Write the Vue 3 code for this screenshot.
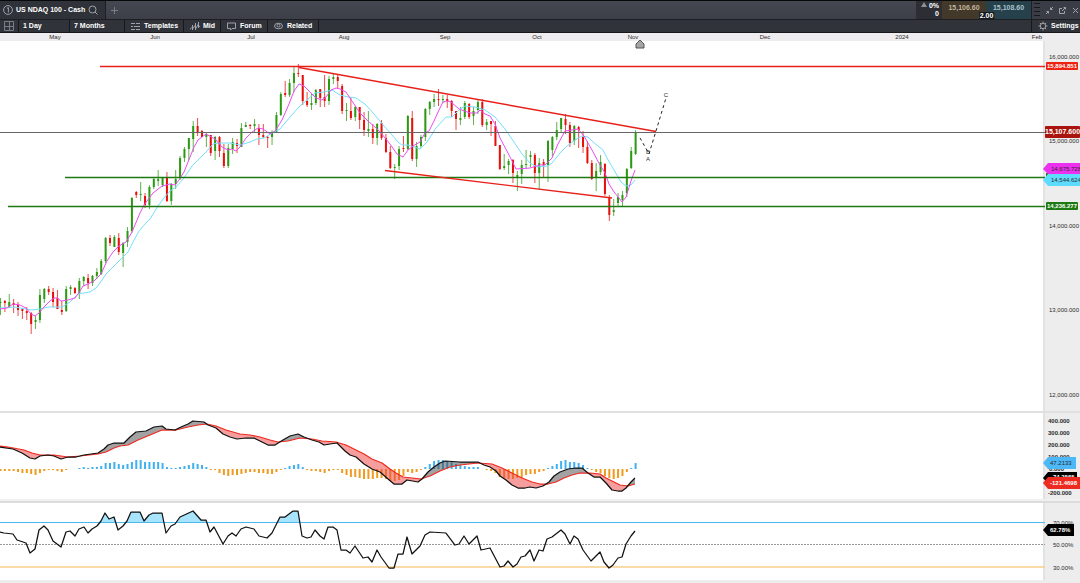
<script setup>
const months = [
  ['May', 55], ['Jun', 155], ['Jul', 251], ['Aug', 344], ['Sep', 445],
  ['Oct', 537], ['Nov', 633], ['Dec', 765], ['2024', 902], ['Feb', 1037],
]

// direction, high, body top, body bottom, low
const rawCandles = `g 298 302 303 315|r 300 301 303 312|g 294 302 307 308|r 299 303 305 313|r 302 305 310 316|r 308 309 311 319|r 307 311 313 320|r 312 313 324 334|g 316 320 322 329|g 289 295 320 323
g 288 289 299 303|r 286 289 292 295|r 288 292 302 307|r 290 298 309 309|r 301 310 312 315|g 286 289 311 312|g 285 287 289 295|r 287 288 293 294|g 278 281 293 299|g 276 277 281 286
r 274 278 283 289|g 275 276 283 286|g 268 272 276 279|g 259 261 274 275|g 237 238 261 263|r 235 238 243 246|g 235 237 247 247|r 233 238 252 255|g 242 243 253 267|g 227 231 242 247
g 197 198 231 233|r 191 192 195 198|g 182 194 195 201|r 193 196 205 208|g 185 187 205 209|g 178 179 187 189|g 170 179 181 186|g 177 178 185 187|r 172 177 201 202|g 183 184 201 205
g 170 179 184 189|g 156 158 178 180|g 147 149 158 162|g 138 138 149 160|g 121 126 139 152|r 118 126 132 136|r 130 131 137 137|g 132 134 137 147|r 135 135 153 156|g 136 137 151 160
r 136 137 151 157|r 144 153 166 168|g 144 148 166 168|g 138 142 149 154|r 139 143 146 153|g 123 128 147 147|g 122 125 127 127|r 124 125 126 129|g 119 124 126 133|r 124 128 135 145
r 124 135 137 138|r 136 137 138 148|g 130 132 137 145|g 112 115 132 132|g 92 94 115 116|r 81 93 95 97|g 79 83 95 97|g 67 73 83 92|r 64 73 74 77|r 75 75 101 105
r 92 101 105 107|g 94 103 105 110|g 89 90 103 105|r 89 89 98 107|r 75 97 101 107|g 76 79 101 105|g 73 77 79 84|r 75 77 81 88|r 84 86 111 114|g 103 110 111 121
r 97 111 118 120|g 106 107 117 121|r 107 107 120 129|r 112 120 130 136|g 111 129 131 137|r 124 129 138 144|g 123 124 138 145|r 120 123 138 140|r 134 138 152 153|r 146 152 168 169
g 164 167 168 179|g 146 149 166 170|r 136 148 149 152|g 115 116 149 150|r 111 118 159 161|g 142 146 159 167|g 135 137 146 148|g 108 109 137 141|g 101 102 109 115|g 94 99 102 107
r 89 99 100 106|g 95 99 100 103|r 95 99 101 108|r 100 101 111 117|r 111 111 119 130|g 107 118 120 125|g 101 103 117 119|r 103 104 117 119|g 107 111 116 125|g 100 102 110 114
r 99 102 125 127|g 119 122 125 130|r 121 121 124 136|r 121 126 146 146|r 145 145 169 170|g 154 166 168 170|g 159 161 165 174|r 159 160 173 183|g 171 175 178 191|g 160 165 174 184
g 150 164 165 169|g 151 155 157 167|r 153 155 173 183|g 158 163 173 189|r 159 162 165 177|g 140 141 165 182|g 136 137 150 156|g 122 130 137 140|g 118 118 129 133|r 114 119 125 134
r 122 125 143 147|g 125 126 141 145|r 126 127 130 148|r 131 137 147 153|r 141 147 163 164|r 160 163 179 180|g 163 171 177 191|g 155 162 172 175|r 163 164 194 196|r 195 198 215 221
g 199 210 212 216|g 193 197 203 207|g 191 195 200 207|g 168 169 193 197|g 147 151 168 169|g 130 133 154 155`

const barX = (i) => 0.5 + i * 4.38

const candles = rawCandles.split(/[|\n]/).map((row, i) => {
  const [dir, high, top, bottom, low] = row.split(' ')
  return { x: barX(i), dir, high: +high, top: +top, bottom: Math.max(+bottom, +top + 1), low: +low }
})

const fastAverage = '0,309 7,308 13,304 20,305 26,308 31,314 35,316 39,313 44,307 50,301 54,298 57,298 61,301 68,300 75,298 78,294 83,286 88,284 94,281 101,274 107,261 113,252 119,246 126,242 132,232 140,213 144,205 153,193 162,186 170,184 175,185 179,180 184,172 190,157 194,147 198,140 206,134 215,139 222,147 228,150 232,149 236,151 240,147 246,138 252,132 258,128 263,129 270,134 275,131 282,120 289,104 294,91 299,84 304,86 310,92 316,98 322,100 326,97 331,90 336,88 340,89 346,92 352,101 360,113 368,121 376,128 381,133 390,144 397,154 403,157 408,150 413,146 420,142 425,133 429,131 434,121 439,110 443,102 447,101 451,102 459,109 470,113 477,113 480,110 485,114 490,116 495,124 500,138 508,153 512,161 516,169 530,168 540,165 545,165 552,158 558,144 565,131 572,130 578,129 584,136 592,150 600,165 605,173 609,184 614,192 619,198 622,202 626,197 631,181 635,170'

const slowAverage = '0,308 15,307 26,309 31,310 40,309 48,307 62,307 70,302 78,294 90,292 96,288 100,283 106,274 114,266 122,258 128,252 133,242 139,231 145,224 150,219 158,206 164,198 170,191 176,187 184,178 192,166 199,159 206,152 213,144 219,143 230,143 240,145 250,142 257,139 264,138 272,133 280,129 290,117 299,107 308,99 315,93 324,92 332,90 340,95 348,97 356,98 365,104 374,114 384,126 392,135 398,142 402,145 408,145 414,147 420,149 427,142 436,128 446,117 452,117 460,109 465,106 475,107 485,110 495,117 505,129 514,142 522,154 530,163 537,167 548,166 552,163 560,153 567,146 575,140 582,136 588,137 592,141 598,146 603,150 607,158 614,170 621,182 626,186 631,185 635,180'

const macd = '0,447 13,449 22,453 30,458 35,459 40,456 48,455 54,456 61,459 68,457 76,457 84,455 98,453 104,449 108,445 114,443 124,443 130,437 136,432 146,431 154,427 162,426 166,429 175,430 181,427 188,424 193,421 204,422 208,425 216,428 223,434 230,437 237,439 246,438 254,438 260,441 268,445 275,445 283,440 290,436 298,434 304,437 312,440 319,442 324,445 330,444 337,443 345,451 350,455 356,457 364,464 372,469 380,472 388,479 394,484 402,484 407,480 418,482 422,479 428,472 434,467 440,463 445,461 460,462 478,462 484,465 490,467 496,471 500,476 506,480 512,485 518,488 525,488 530,487 536,488 543,486 549,482 554,476 560,472 568,469 576,468 582,468 588,473 594,477 600,477 606,483 612,490 618,491 622,491 626,488 631,482 635,478'

const signal = '0,446 8,447 24,450 32,453 40,455 54,455 68,457 80,456 98,454 106,452 114,448 120,446 128,445 138,440 150,435 162,430 176,430 188,427 198,425 207,424 216,426 226,430 240,434 250,435 260,437 270,440 278,442 288,441 300,438 312,439 322,441 336,442 346,445 356,450 364,454 372,459 382,463 390,469 396,473 403,477 412,478 421,479 430,476 440,471 450,467 460,465 478,463 492,464 502,468 512,473 522,478 532,482 540,484 548,484 556,482 564,478 572,475 580,473 590,473 600,474 606,478 614,482 620,485 628,486 635,484'

const rsi = '0,532 4,533 13,534 17,540 26,543 30,553 35,549 39,530 44,526 48,530 53,541 61,547 66,532 70,531 75,536 79,529 84,527 88,533 92,529 97,526 101,521 105,513 109,519 114,517 118,530 123,526 127,521 131,512 140,512 144,521 149,515 153,513 162,513 166,533 171,526 175,524 180,517 193,511 201,520 206,520 210,532 214,527 223,544 228,536 232,533 236,536 241,529 246,527 254,529 259,536 267,538 272,533 280,517 285,517 293,511 298,511 302,536 307,538 311,537 315,530 320,536 324,539 328,527 333,527 337,530 341,550 346,550 350,553 355,546 363,558 368,557 372,562 377,550 381,557 389,568 394,568 398,554 403,554 407,537 412,554 420,546 425,535 430,532 446,533 455,545 459,544 464,536 469,544 477,536 481,550 490,548 500,567 504,566 508,561 513,567 517,564 521,557 525,556 530,550 534,561 539,550 543,551 547,539 552,537 561,530 565,534 570,544 574,536 578,539 583,550 591,561 600,552 604,562 609,568 613,565 618,558 622,557 626,544 631,536 635,531'

const histogram = [
  -2, -2, -2, -2, -3, -4, -4, -5, -6, -4, -2, -1, -1, -2, -3, -1, 0, 0, 1, 2, 1, 2, 2, 3, 6, 6, 7, 5, 4, 5,
  7, 9, 9, 7, 7, 7, 7, 6, 2, 1, 1, 2, 3, 4, 6, 5, 4, 2, -1, -1, -4, -6, -7, -6, -6, -5, -4, -3, -3, -4,
  -4, -5, -5, -3, -1, 1, 3, 4, 5, 2, -1, -2, -2, -3, -4, -2, -1, -1, -4, -6, -8, -8, -9, -10, -10, -10, -9, -9, -10, -12,
  -12, -11, -7, -3, -4, -3, -1, 2, 5, 8, 9, 9, 8, 7, 5, 4, 3, 2, 2, 2, 0, -1, -2, -4, -8, -9, -10, -10, -9, -9,
  -6, -5, -5, -3, -2, 1, 3, 5, 8, 9, 7, 7, 6, 4, 1, -1, -3, -4, -7, -9, -10, -9, -7, -3, 1, 6,
]

const bars = histogram.map((v, i) => ({
  x: barX(i) - 1,
  y: v > 0 ? 469 - v : 469,
  height: Math.abs(v),
  kind: v > 0 ? 'rise' : 'fall',
}))

const parse = (s) => s.split(' ').map((p) => p.split(',').map(Number))

function sample(points) {
  const out = []
  let k = 0
  for (let x = 0; x <= 635; x++) {
    while (k < points.length - 2 && points[k + 1][0] < x) k++
    const [x0, y0] = points[k]
    const [x1, y1] = points[k + 1]
    out.push(y0 + ((y1 - y0) * (x - x0)) / (x1 - x0))
  }
  return out
}

function between(a, b) {
  const forward = a.map((y, x) => `${x},${y.toFixed(1)}`)
  const back = b.map((y, x) => `${x},${y.toFixed(1)}`).reverse()
  return [...forward, ...back].join(' ')
}

const m = sample(parse(macd))
const s = sample(parse(signal))
const r = sample(parse(rsi))
const bullArea = between(m.map((y, x) => Math.min(y, s[x])), s)
const bearArea = between(s, m.map((y, x) => Math.max(y, s[x])))
const overbought = between(r.map((y) => Math.min(y, 522)), r.map(() => 522))
const oversold = between(r.map((y) => Math.max(y, 567)), r.map(() => 567))
</script>

<template>
  <main class="terminal">
    <header class="titlebar">
      <div class="tab">
        <svg class="icon" width="10" height="10" viewBox="0 0 10 10">
          <circle cx="5" cy="5" r="4.400" /><path d="M4 3.400 5.400 2.500V7.500" />
        </svg>
        <span>US NDAQ 100 - Cash</span>
        <button class="plain" aria-label="Search">
          <svg class="icon" width="10" height="10" viewBox="0 0 10 10">
            <circle cx="4.500" cy="4.500" r="3.500" /><path d="M7 7 9.500 9.500" />
          </svg>
        </button>
      </div>
      <button class="plain add" aria-label="Add tab">
        <svg class="icon dim" width="7" height="7" viewBox="0 0 7 7"><path d="M3.500 0v7M0 3.500h7" /></svg>
      </button>
      <div class="change">
        <span><svg width="6" height="6" viewBox="0 0 6 6"><path d="M3 0 6 5H0z" fill="#8d9096" /></svg> 0%</span>
        <span>0</span>
      </div>
      <div class="quotes">
        <button class="quote sell">15,106.60</button>
        <button class="quote buy">15,108.60</button>
        <span class="spread">2.00</span>
      </div>
      <div class="window">
        <svg class="grip" width="6" height="16" viewBox="0 0 6 16"><path d="M0 1.500h6M0 5.500h6M0 9.500h6M0 13.500h6" /></svg>
        <button class="plain" aria-label="Shrink">
          <svg class="icon" width="7" height="7" viewBox="0 0 7 7"><path d="M7 0 4.500 2.500M4.500 .5v2h2M0 7 2.500 4.500M.5 4.500h2v2" /></svg>
        </button>
        <button class="plain" aria-label="Detach">
          <svg class="icon" width="7" height="7" viewBox="0 0 7 7"><path d="M3 1.500H.5v5h5V4M3 4 6.500 .5M4.500 .5h2v2" /></svg>
        </button>
        <button class="plain" aria-label="Close">
          <svg class="icon" width="7" height="7" viewBox="0 0 7 7"><path d="M1 1l5 5M6 1l-5 5" /></svg>
        </button>
      </div>
    </header>

    <nav class="toolbar">
      <button class="tool grid" aria-label="Layout">
        <svg class="icon dim" width="10" height="10" viewBox="0 0 10 10"><path d="M.5 .5h9v9h-9zM5.500 .5v9M.5 5.500h9" /></svg>
      </button>
      <button class="tool day">1 Day</button>
      <button class="tool range">7 Months</button>
      <button class="tool templates">
        <svg class="icon" width="9" height="9" viewBox="0 0 9 9"><path d="M0 1.500h4M5 1.500h4M0 4.500h2M3 4.500h6M0 7.500h4M5 7.500h4" /></svg>
        Templates
      </button>
      <button class="tool mid">
        <svg class="icon" width="10" height="9" viewBox="0 0 10 9"><path d="M0 7.500 1.500 5.500M2.500 3v5M2.500 7 5.500 3M5.500 1v7M5.500 7 8.500 2M8.500 0v6M8.500 5 10 4" /></svg>
        Mid
      </button>
      <button class="tool forum">
        <svg class="icon" width="9" height="9" viewBox="0 0 9 9"><path d="M.5 1h8v5.500H5L3.500 8V6.500H.5z" /></svg>
        Forum
      </button>
      <button class="tool related">
        <svg class="icon" width="9" height="8" viewBox="0 0 9 8"><ellipse cx="4.500" cy="4" rx="4" ry="2.800" /><circle cx="4.500" cy="3.500" r="1.500" /></svg>
        Related
      </button>
      <button class="tool settings">
        <svg class="icon" width="10" height="10" viewBox="0 0 10 10">
          <circle cx="5" cy="5" r="2.700" /><path d="M5 .5v1.500M5 8v1.500M.5 5H2M8 5h1.500M1.800 1.800l1.200 1.200M7 7l1.200 1.200M8.200 1.800 7 3M3 7 1.800 8.200" />
        </svg>
        Settings
      </button>
    </nav>

    <svg class="panel" viewBox="0 33 1080 378" role="img" aria-label="Price chart">
      <rect y="33" width="1080" height="8" fill="#eeecee" />
      <rect x="1043" y="41" width="37" height="370" fill="#ededed" />
      <rect x="1043" y="41" width="2" height="370" fill="#e2e2e2" />
      <text v-for="[label, x] in months" :key="label" :x="x" y="39" class="middle">{{ label }}</text>
      <path d="M636 44l4-4 4 4v4h-8z" fill="#a5a5a5" stroke="#555" />

      <g v-for="(c, i) in candles" :key="i" :class="c.dir">
        <line :x1="c.x" :x2="c.x" :y1="c.high" :y2="c.low" class="wick" />
        <rect :x="c.x - 1" :y="c.top" width="2" :height="c.bottom - c.top" />
      </g>
      <polyline :points="slowAverage" class="line slow" />
      <polyline :points="fastAverage" class="line fast" />

      <path d="M100 66.500H1045" stroke="#e8201a" stroke-width="1.500" />
      <path d="M0 132.500H1045" stroke="#666" />
      <path d="M65 177.500H1045M8 206.500H1045" stroke="#1d7a12" stroke-width="1.500" />
      <path d="M299 67.500 656 131.500M385 170.500 612 198" stroke="#e8201a" stroke-width="1.400" />
      <path d="M640 138 648 152M649 154 666 98" stroke="#222" stroke-dasharray="3 3" />
      <g class="middle">
        <text x="648" y="154">B</text>
        <text x="648" y="161">A</text>
        <text x="666" y="97">C</text>
      </g>

      <text x="1049" y="59">16,000.000</text>
      <text x="1049" y="143">15,000.000</text>
      <text x="1049" y="228">14,000.000</text>
      <text x="1049" y="312">13,000.000</text>
      <text x="1049" y="397">12,000.000</text>
      <rect x="1046" y="62" width="32" height="8" rx="1" fill="#ee2211" />
      <text x="1047" y="68" class="tag">15,894.851</text>
      <rect x="1045" y="126" width="35" height="12" rx="1" fill="#a9140c" />
      <text x="1045" y="134" class="tag large">15,107.600</text>
      <rect x="1046" y="173" width="32" height="8" fill="#1d7a12" />
      <path d="M1043 169l5-6h32v11h-32z" fill="#ec30f0" />
      <text x="1051" y="171">14,675.728</text>
      <path d="M1043 180l5-6h32v12h-32z" fill="#5edcff" />
      <text x="1051" y="182">14,544.624</text>
      <rect x="1046" y="202" width="32" height="8" rx="1" fill="#1d7a12" />
      <text x="1047" y="208" class="tag">14,236.277</text>
    </svg>

    <svg class="panel" viewBox="0 411 1080 90" role="img" aria-label="MACD">
      <rect x="1043" y="411" width="37" height="90" fill="#ededed" />
      <rect x="1043" y="411" width="2" height="90" fill="#e2e2e2" />
      <rect y="411" width="1080" height="2" fill="#e0e0e0" />
      <rect v-for="(b, i) in bars" :key="i" :class="b.kind" :x="b.x" :y="b.y" width="2" :height="b.height" />
      <polygon :points="bullArea" class="bull" />
      <polygon :points="bearArea" class="bear" />
      <polyline :points="signal" class="line signal" />
      <polyline :points="macd" class="line dark" />
      <rect y="499" width="1080" height="2" fill="#f0f0f0" />
      <g class="strong">
        <text x="1048" y="423">400.000</text>
        <text x="1048" y="435">300.000</text>
        <text x="1048" y="447">200.000</text>
        <text x="1048" y="459">100.000</text>
        <text x="1049" y="471">0.000</text>
        <text x="1048" y="495">-200.000</text>
      </g>
      <path d="M1043 478l5-6h29v12h-29z" fill="#000" />
      <text x="1051" y="479" class="tag">-74.2565</text>
      <path d="M1043 463l5-6h28v12h-28z" fill="#4db8f8" />
      <text x="1050" y="465">47.2133</text>
      <path d="M1043 483l5-6h32v12h-32z" fill="#ee2b20" />
      <text x="1050" y="485" class="tag">-121.4698</text>
    </svg>

    <svg class="panel" viewBox="0 501 1080 82" role="img" aria-label="RSI">
      <rect x="1043" y="501" width="37" height="82" fill="#ededed" />
      <rect x="1043" y="501" width="2" height="82" fill="#e2e2e2" />
      <rect y="501" width="1080" height="2" fill="#dcdcdc" />
      <polygon :points="overbought" fill="#a8e4fb" />
      <polygon :points="oversold" fill="#ffd27a" />
      <path d="M0 522.500H1045" stroke="#4cb9ea" />
      <path d="M0 544.500H1045" stroke="#999" stroke-dasharray="2 1" />
      <path d="M0 567H1045" stroke="#f8cf8a" stroke-width="1.500" />
      <polyline :points="rsi" class="line dark" />
      <rect y="580" width="1080" height="3" fill="#ededed" />
      <text x="1053" y="525">70.00%</text>
      <text x="1053" y="547">50.00%</text>
      <text x="1053" y="570">30.00%</text>
      <path d="M1043 530l5-6h26v12h-26z" fill="#000" />
      <text x="1050" y="532" class="tag">62.78%</text>
    </svg>
  </main>
</template>

<style>
body {
  margin: 0;
  background: #fff;
}
</style>

<style scoped>
.terminal {
  font-family: "Liberation Sans", Arial, sans-serif;
  font-size: 7px;
  line-height: 8px;
  color: #fff;
  overflow: hidden;
}

button {
  font: inherit;
  color: inherit;
  background: none;
  border: 0;
  padding: 0;
  margin: 0;
}

.titlebar {
  display: flex;
  height: 20px;
  box-sizing: border-box;
  border-top: 1px solid #08090b;
  border-bottom: 1px solid #1c1e22;
  background: linear-gradient(#454851, #3c3f47);
}

.tab {
  display: flex;
  align-items: center;
  gap: 3px;
  width: 106px;
  box-sizing: border-box;
  padding-left: 3px;
  font-weight: bold;
  background: #2f3238;
  border-right: 1px solid #1c1e22;
}

.plain {
  display: flex;
  align-items: center;
}

.add {
  margin-left: 5px;
}

.icon {
  fill: none;
  stroke: #9fa2a8;
  stroke-width: 1;
  flex: none;
}

.icon.dim {
  stroke: #7a7d85;
}

.change {
  display: flex;
  flex-direction: column;
  align-items: flex-end;
  justify-content: center;
  width: 26px;
  margin-left: auto;
  padding-right: 3px;
  box-sizing: border-box;
  font-weight: bold;
  background: #2c2e34;
}

.quotes {
  position: relative;
  display: flex;
}

.quote {
  width: 44px;
  padding-bottom: 5px;
  font-weight: bold;
}

.sell {
  color: #c0b49a;
  background: #43392a;
}

.buy {
  width: 45px;
  color: #a9c3cb;
  background: #26414b;
}

.spread {
  position: absolute;
  left: 50%;
  bottom: 0;
  transform: translateX(-50%);
  padding: 0 1px;
  line-height: 7px;
  font-weight: bold;
  background: #17191d;
}

.window {
  display: flex;
  align-items: center;
  gap: 6px;
  width: 49px;
  box-sizing: border-box;
  padding-left: 2px;
  background: #3a3d45;
  border-left: 1px solid #1c1e22;
}

.grip {
  flex: none;
  stroke: #17181b;
  stroke-width: 1;
}

.toolbar {
  display: flex;
  height: 13px;
  background: #303339;
  border-bottom: 1px solid #17181b;
  box-sizing: border-box;
  font-weight: bold;
}

.tool {
  display: flex;
  align-items: center;
  gap: 4px;
  padding-left: 6px;
  box-sizing: border-box;
  border-right: 1px solid #17181b;
}

.grid {
  width: 19px;
  padding-left: 4px;
}

.day {
  width: 51px;
  padding-left: 4px;
}

.range {
  width: 55px;
  padding-left: 4px;
}

.templates {
  width: 59px;
}

.mid {
  width: 37px;
  gap: 3px;
}

.forum {
  width: 47px;
}

.related {
  width: 51px;
}

.settings {
  width: 49px;
  margin-left: auto;
  border-right: 0;
  border-left: 1px solid #17181b;
  gap: 3px;
}

.panel {
  display: block;
  width: 100%;
  height: auto;
}

.panel text {
  font-size: 6px;
  fill: #2b2b2b;
}

.panel text.middle,
.middle text {
  text-anchor: middle;
}

.panel text.tag {
  font-weight: bold;
  fill: #fff;
}

.panel text.large {
  font-size: 7px;
}

.strong text {
  font-weight: bold;
}

.wick {
  stroke-width: 1;
  opacity: 0.75;
}

.g {
  fill: #2b9a12;
  stroke: none;
}

.g .wick {
  stroke: #2b9a12;
}

.r {
  fill: #e60f0a;
}

.r .wick {
  stroke: #e60f0a;
}

.line {
  fill: none;
  stroke-linejoin: round;
}

.fast {
  stroke: #ea4df0;
}

.slow {
  stroke: #74e0fb;
}

.dark {
  stroke: #111;
  stroke-width: 1.25;
}

.signal {
  stroke: #ee2b20;
  stroke-width: 1.25;
}

.bull {
  fill: rgba(70, 70, 70, 0.5);
}

.bear {
  fill: rgba(238, 60, 60, 0.5);
}

.rise {
  fill: #3fb0f2;
}

.fall {
  fill: #f09a1e;
}
</style>
